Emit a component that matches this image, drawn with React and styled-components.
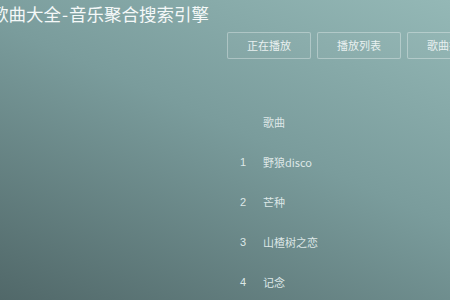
import React from "react";
import styled, { createGlobalStyle } from "styled-components";

const Global = createGlobalStyle`
  html, body { margin: 0; padding: 0; }
  body {
    width: 450px;
    height: 300px;
    overflow: hidden;
    background: linear-gradient(204deg, #94b8b6 0%, #7a9c9c 45%, #516869 100%);
    font-family: "Noto Sans CJK SC", "Noto Sans", sans-serif;
  }
`;

const Page = styled.div`
  width: 450px;
  height: 300px;
  overflow: hidden;
`;

const Title = styled.h1`
  margin: 0 0 0 -9px;
  font-size: 17.5px;
  font-weight: 400;
  line-height: 28px;
  color: #f4f8f8;
  white-space: nowrap;
`;

const Dash = styled.span`
  padding: 0 1px;
`;

const Nav = styled.nav`
  display: flex;
  gap: 6px;
  margin-top: 4px;
  padding-left: 227px;
  white-space: nowrap;
`;

const NavButton = styled.button`
  flex: 0 0 auto;
  width: 84px;
  height: 27px;
  padding: 0;
  border: 1px solid rgba(255, 255, 255, 0.32);
  border-radius: 2px;
  background: rgba(255, 255, 255, 0.03);
  color: #e8f0f0;
  font-family: inherit;
  font-size: 11px;
  line-height: 25px;
  text-align: center;
`;

const Songs = styled.div`
  margin: 43px 0 0 232px;
  display: grid;
  grid-template-columns: 22px auto;
  grid-auto-rows: 40px;
  column-gap: 9px;
  align-items: center;
  color: #dde7e7;
  font-size: 11px;
`;

const Num = styled.span`
  text-align: center;
  font-family: "Liberation Sans", "Noto Sans CJK SC", sans-serif;
  font-size: 11px;
`;

const Name = styled.span`
  white-space: nowrap;
`;

const songs = ["野狼disco", "芒种", "山楂树之恋", "记念"];

export default function App() {
  return (
    <Page>
      <Global />
      <Title>
        歌曲大全<Dash>-</Dash>音乐聚合搜索引擎
      </Title>
      <Nav>
        <NavButton>正在播放</NavButton>
        <NavButton>播放列表</NavButton>
        <NavButton>歌曲搜索</NavButton>
      </Nav>
      <Songs>
        <Num />
        <Name>歌曲</Name>
        {songs.map((s, i) => (
          <React.Fragment key={s}>
            <Num>{i + 1}</Num>
            <Name>{s}</Name>
          </React.Fragment>
        ))}
      </Songs>
    </Page>
  );
}
